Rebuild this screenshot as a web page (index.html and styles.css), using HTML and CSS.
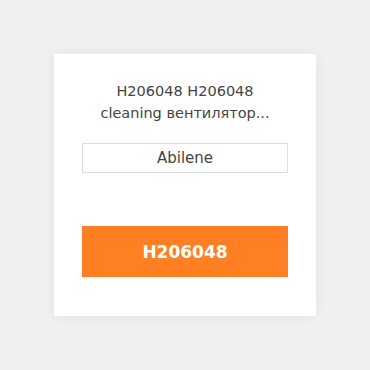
FILE: index.html
```html
<!DOCTYPE html>
<html>
<head>
<meta charset="utf-8">
<link rel="stylesheet" href="styles.css">
</head>
<body>
<div class="card">
  <div class="title">H206048 H206048<br>cleaning вентилятор...</div>
  <div class="field">Abilene</div>
  <div class="btn">H206048</div>
</div>
</body>
</html>
```
FILE: styles.css
```css
html, body {
  margin: 0;
  height: 100%;
}
body {
  background: #f0f0f0;
  display: flex;
  align-items: center;
  justify-content: center;
  font-family: "DejaVu Sans", sans-serif;
  color: #444;
}
.card {
  width: 262px;
  height: 262px;
  box-sizing: border-box;
  background: #fff;
  padding: 26px 28px 0;
  box-shadow: 0 0 12px rgba(0,0,0,0.06);
  display: flex;
  flex-direction: column;
}
.title {
  text-align: center;
  font-size: 14.5px;
  line-height: 22px;
}
.field {
  margin-top: 19px;
  height: 30px;
  box-sizing: border-box;
  border: 1px solid #dcdcdc;
  display: flex;
  align-items: center;
  justify-content: center;
  font-size: 15px;
}
.btn {
  margin-top: 53px;
  height: 51px;
  background: #ff7f22;
  color: #fff;
  font-weight: bold;
  font-size: 17px;
  display: flex;
  align-items: center;
  justify-content: center;
}
```
